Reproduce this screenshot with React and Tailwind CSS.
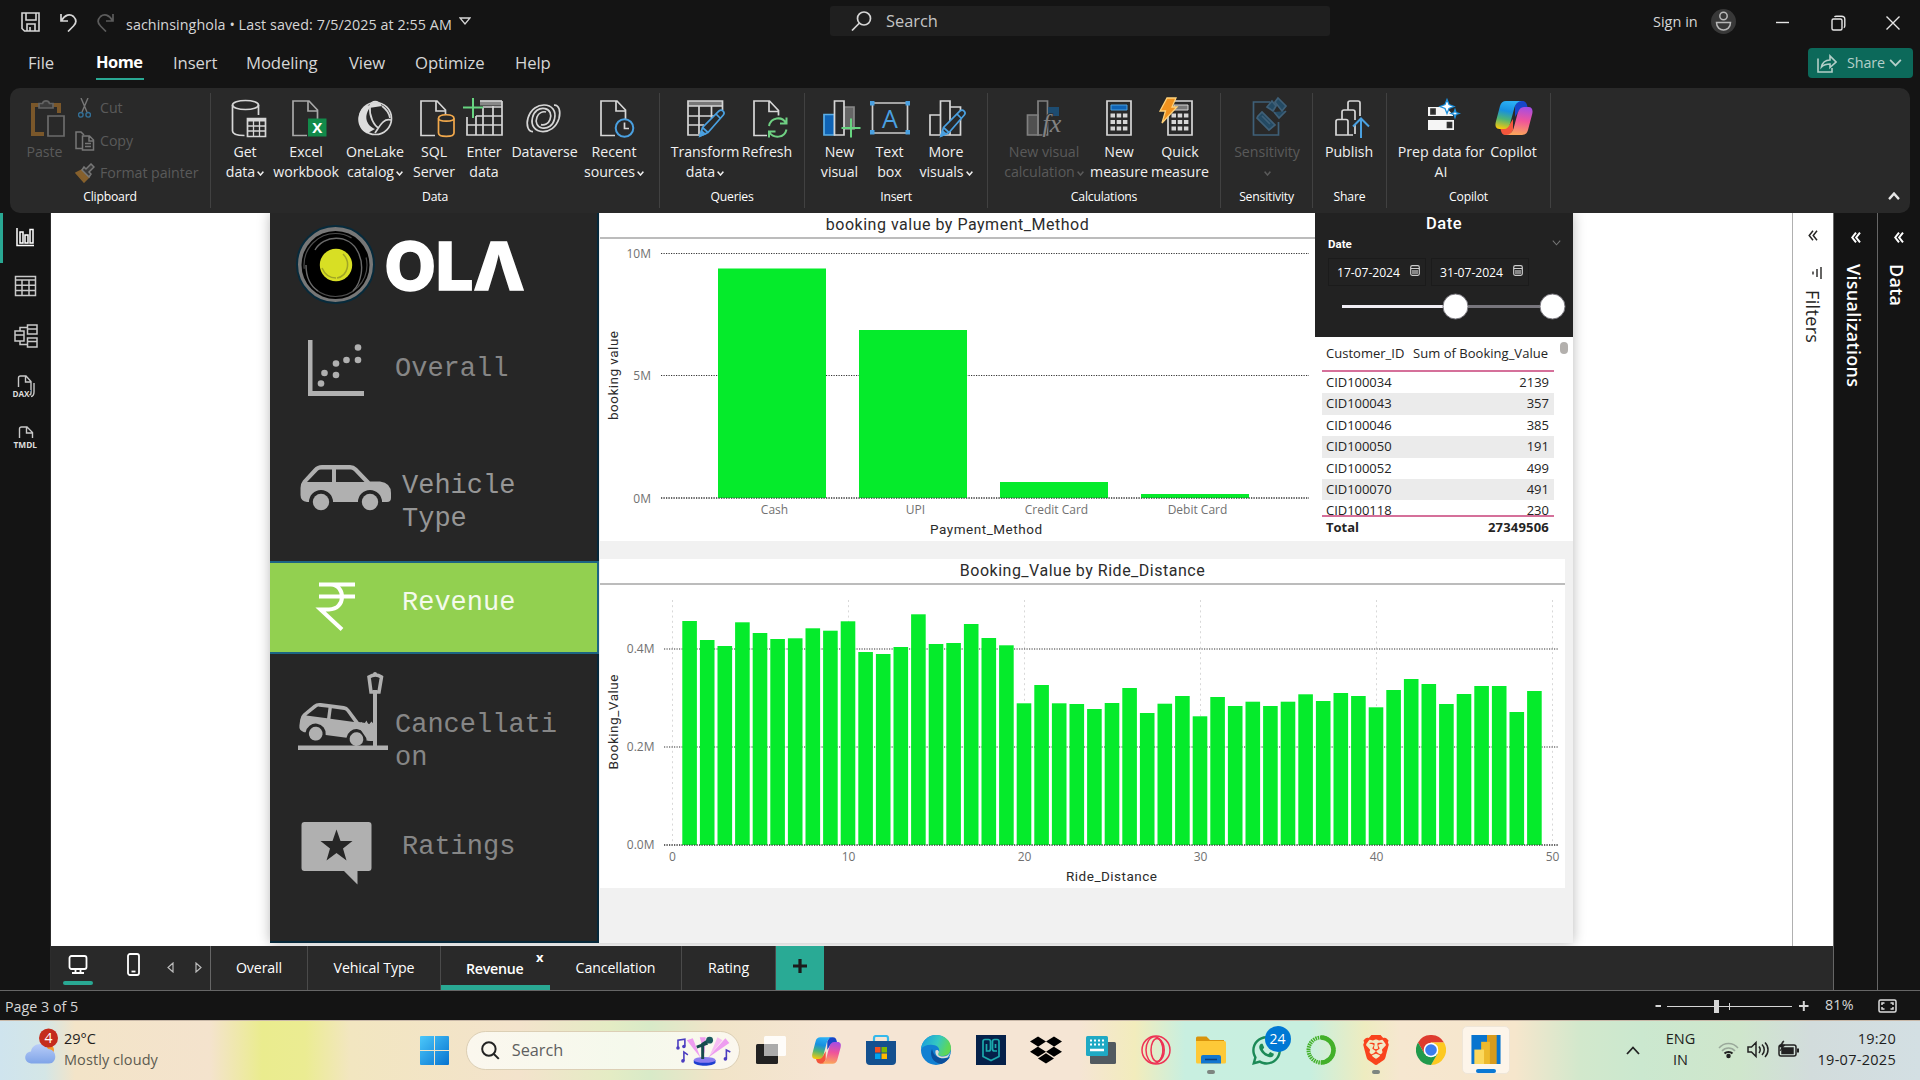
import React from "react";
import { FaWhatsapp, FaDropbox } from "react-icons/fa";
import { SiBrave } from "react-icons/si";

const LINE = "#d6d6d6";
const BLUE = "#4aa0e0";

/* ---------- shared drawings ---------- */

function Chevron({ className = "", w = 8, h = 5, sw = 1.6, up = false }) {
  return (
    <svg className={className} width={w} height={h} viewBox="0 0 8 5" preserveAspectRatio="none" fill="none" stroke="currentColor" strokeWidth={sw}>
      <path d={up ? "M.7 4.4 4 1l3.3 3.4" : "M.7.6 4 4 7.3.6"} />
    </svg>
  );
}

const COPILOT_WING = "M12 3H28C24 3 21.500 6 20.300 10L16.300 25C15 29 13 31 10 31H5.500C2 31 .8 28 1.800 24L6 8C7 4.500 9 3 12 3Z";

function CopilotLogo({ size = 38, id }) {
  return (
    <svg width={size} height={size} viewBox="0 0 40 40" fill="none">
      <defs>
        <linearGradient id={id + "a"} x1="14" y1="3" x2="8" y2="31" gradientUnits="userSpaceOnUse">
          <stop offset="0" stopColor="#2bb0f5" />
          <stop offset=".35" stopColor="#1790e0" />
          <stop offset=".65" stopColor="#4fb474" />
          <stop offset="1" stopColor="#f7c80c" />
        </linearGradient>
        <linearGradient id={id + "b"} x1="12" y1="3" x2="8" y2="31" gradientUnits="userSpaceOnUse">
          <stop offset="0" stopColor="#fba35c" />
          <stop offset=".5" stopColor="#f0549a" />
          <stop offset="1" stopColor="#a34de6" />
        </linearGradient>
      </defs>
      <path d="M24 3h4c3.500 0 4.500 2 5.300 5l.8 3.500C29 11 25 11 23.500 15L21 19V8z" fill="#1746c9" />
      <path d="M16 37h-4c-3.500 0-4.500-2-5.300-5L5.900 28.500C11 29 15 29 16.500 25L19 21V32z" fill="#f3563c" />
      <path d={COPILOT_WING} fill={`url(#${id}a)`} />
      <path d={COPILOT_WING} fill={`url(#${id}b)`} transform="rotate(180 20 20)" />
    </svg>
  );
}

/* ---------- ribbon icons, all on a 40x40 grid ---------- */

function Ico({ children, className = "" }) {
  return (
    <svg className={"overflow-visible " + className} width="40" height="40" viewBox="0 0 40 40" fill="none" stroke={LINE} strokeWidth="1.7">
      {children}
    </svg>
  );
}

const DocShape = ({ stroke = LINE }) => <path stroke={stroke} d="M21 37.500H7V3h16l8.500 9v9M22 3v10h9.500" />;

const Pencil = () => (
  <g stroke={BLUE} fill="#292929">
    <path d="M15 38l2.500-8.500L34 13c3-2.500 6.500 1.500 4.300 4L23 34.500z" />
    <path d="M31 16l4.500 4.500M17.500 29.500L23 34.500" />
    <path d="M15 38l1.500-5 3.500 3z" fill={BLUE} />
  </g>
);

const Keys = () => <path d="M11.500 17.500h17M11.500 24h17M11.500 30.500h17" strokeWidth="4" strokeDasharray="4.500 1.700" />;

const DATAVERSE_ARM = "M8 33.500C3 34 1 27 3 20C6 10.500 13 7 19 7C27 7 31.500 13 29.500 21C28 27.500 23 31 17 30C12 29 10 24 12 19C13.500 15 17.500 13 21 14";

const icons = {
  paste: (
    <Ico className="opacity-45">
      <path d="M19 36H8V7h26v8" stroke="#dc8f2c" strokeWidth="4" />
      <path d="M14 10V5.500h3.500C18.500 2 23.500 2 24.500 5.500H28V10z" fill="#555" stroke="#aaa" />
      <path d="M23 18h16v20H23z" fill="#292929" stroke="#bbb" />
    </Ico>
  ),
  getData: (
    <Ico>
      <ellipse cx="20.500" cy="7" rx="13" ry="4.500" />
      <path d="M7.500 7v26c0 2.500 4 4.500 12 4.500M33.500 7v10" />
      <path d="M22.500 20.500h18v18h-18z" fill="#292929" />
      <path d="M22.500 22h18" strokeWidth="3" />
      <path d="M22.500 28h18M22.500 33h18M28.500 23v15M34.500 23v15" strokeWidth="1.300" />
    </Ico>
  ),
  excel: (
    <Ico>
      <DocShape stroke="#a8a8a8" />
      <path d="M22 20.500h18.500v18H22z" fill="#128a4a" stroke="none" />
      <text x="31.300" y="35" textAnchor="middle" fontSize="15" fontWeight="700" fill="#fff" stroke="none">X</text>
    </Ico>
  ),
  onelake: (
    <Ico>
      <path d="M14 8c2-7 10-7 13 0l-13 2z" fill="#ddd" stroke="none" />
      <circle cx="20.500" cy="20.500" r="16" />
      <path d="M12 7C0 14 1 30 12 35.500L20 31C11 27 8 18 16 8z" fill="#ddd" stroke="none" />
      <path d="M15 9c-1 9 4 19 9 21M36 22c-8-2-11 6-16 13M27 8c4 3 7 6 8 12" />
    </Ico>
  ),
  sql: (
    <Ico>
      <DocShape />
      <path d="M24.500 20.500c0-5 15.500-5 15.500 0v14.500c0 4.500-15.500 4.500-15.500 0z" fill="#292929" stroke="#f2a94c" />
      <path d="M24.500 20.500c0 3.500 15.500 3.500 15.500 0" stroke="#f2a94c" />
    </Ico>
  ),
  enter: (
    <Ico>
      <path d="M16 5h22" strokeWidth="5" stroke="#888" />
      <path d="M38 3v34H3V19M16 3h22M3 27h35M19 10v27M29 8v29M12 18h26M12 18v19M19 9h19" />
      <path d="M9 0v20M-1 9.500h20" stroke="#67d480" strokeWidth="2" />
    </Ico>
  ),
  dataverse: (
    <Ico>
      <path d={DATAVERSE_ARM} />
      <path d={DATAVERSE_ARM} transform="rotate(180 18.500 20.300)" />
    </Ico>
  ),
  recent: (
    <Ico>
      <DocShape />
      <circle cx="30.500" cy="30" r="8.800" fill="#292929" stroke={BLUE} strokeWidth="2" />
      <path d="M30.500 24.500V30.500H35" />
    </Ico>
  ),
  transform: (
    <Ico>
      <path d="M3 5.500h34.500" strokeWidth="5" stroke="#777" />
      <path d="M37.500 12V3H3v34h12M3 8h34.500M3 18h26M3 27h16M14 8v28M26.500 8v12" />
      <Pencil />
    </Ico>
  ),
  refresh: (
    <Ico>
      <path d="M20 37.500H7V3h15.500l9 9.500v5M22 3v10.500h9.500" />
      <g stroke="#6fd083" strokeWidth="2">
        <path d="M22 28c2-9 13-10 17-3M39.500 19.500v6h-6.500" />
        <path d="M39.500 31.500c-2 9-13 9-17 3M22 39.500v-6h6.500" />
      </g>
    </Ico>
  ),
  newVisual: (
    <Ico>
      <path d="M24 9h10v22H24z" fill="#666" stroke="#888" />
      <path d="M4 16.500h10.500V37H4z" fill="#0f63b5" stroke="#5aaee8" />
      <path d="M14.500 3h9.500v34h-9.500z" fill="#292929" />
      <path d="M31 20.500v19M21.500 30h19" stroke="#67d480" strokeWidth="2" />
    </Ico>
  ),
  textBox: (
    <Ico>
      <path d="M2.500 5h35v30h-35z" stroke="#ccc" />
      <g fill={BLUE} stroke="none">
        <rect x="0" y="3" width="4.500" height="4.500" /><rect x="35.500" y="3" width="4.500" height="4.500" />
        <rect x="0" y="32" width="4.500" height="4.500" /><rect x="35.500" y="32" width="4.500" height="4.500" />
      </g>
      <text x="20" y="29.500" textAnchor="middle" fontSize="25" fill={BLUE} stroke="none">A</text>
    </Ico>
  ),
  moreVisuals: (
    <Ico>
      <path d="M4 17h10.500v20H4zM14.500 3H24v34h-9.500zM24 9h10.500v28H24" />
      <Pencil />
    </Ico>
  ),
  visualCalc: (
    <Ico className="opacity-50">
      <path d="M3.500 17H14v20H3.500z" fill="#777" />
      <path d="M14 3h9.500v34H14z" />
      <path d="M24 9h11v9H24z" fill="#1370b8" stroke="none" />
      <text x="28" y="34" textAnchor="middle" fontFamily="Liberation Serif, serif" fontStyle="italic" fontSize="26" fill="#ddd" stroke="#292929" strokeWidth="1.500" paintOrder="stroke">fx</text>
    </Ico>
  ),
  measure: (
    <Ico>
      <path d="M8 3h24v34H8z" />
      <path d="M12 7h16v5H12z" fill="#0f63b5" stroke="#4aa0e0" strokeWidth="1" />
      <Keys />
    </Ico>
  ),
  quick: (
    <Ico>
      <path d="M8 3h24v34H8z" />
      <path d="M14 7h14v5H14z" fill="#777" strokeWidth="1" />
      <Keys />
      <path d="M7 0h9l-4 9h5L2 25l3.500-12H0z" fill="#f0921e" stroke="#ffd27a" strokeWidth="1.300" />
    </Ico>
  ),
  sensitivity: (
    <Ico>
      <g stroke="#3f6078">
        <path d="M23 4H6.500v33h25V24" />
        <path d="M11 18l4-4 13 13-6 5-12-12zM15 18l8 8" fill="#244a63" />
        <path d="M20 9l5-6 4 5-3 5zM28 4l3-4 8 8-4 5zM27 14l5 6 7-7" fill="#244a63" />
      </g>
    </Ico>
  ),
  publish: (
    <Ico>
      <path d="M24 37H7V23.500q0-2 2-2h8q2 0 2 2V37M13 21V14q0-2 2-2h9q2 0 2 2v8M19 12V5q0-2 2-2h8q2 0 2 2v13M26 26v10" />
      <path d="M32 40V21M24 28.500l8-8 8 8" stroke={BLUE} strokeWidth="2" />
    </Ico>
  ),
  prep: (
    <Ico>
      <path d="M7 9h18l7 8v1H7z" fill="#f5f5f5" stroke="none" />
      <path d="M7 22h26v10H7z" fill="#f5f5f5" stroke="none" />
      <path d="M10 11h4v5h-4zM26.500 24.500h4v5h-4z" fill="#292929" stroke="#333" />
      <path d="M26 1.500l2 5 5 2-5 2-2 5-2-5-5-2 5-2zM34 11.500l1 3 3 1-3 1-1 3-1-3-3-1 3-1z" fill="#fff" stroke="#1a8fdc" strokeWidth="1.300" />
    </Ico>
  ),
};

/* ---------- title bar ---------- */

function TitleBar() {
  return (
    <div className="flex h-11 items-start text-[#d6d6d6]">
      <svg className="mt-3 ml-[21px]" width="19" height="20" viewBox="0 0 19 20" fill="none" stroke={LINE} strokeWidth="1.600">
        <path d="M1 1h17v18H3.500L1 16.500zM5 1v7h10V1M6 19v-7h8v7M9 15v4" />
      </svg>
      <svg className="mt-[13px] ml-5" width="17" height="19" viewBox="0 0 17 19" fill="none" stroke={LINE} strokeWidth="1.700">
        <path d="M1 1v7h7M1.500 7.500C5 1.500 10 .5 13.500 3.500c3.500 3.500 2.500 7 0 9.500L8 18.500" />
      </svg>
      <svg className="mt-[13px] ml-5" width="17" height="19" viewBox="0 0 17 19" fill="none" stroke="#5c5c5c" strokeWidth="1.700">
        <path d="M16 1v7H9M15.500 7.500C12 1.500 7 .5 3.500 3.500 0 7 1 10.500 3.500 13L9 18.500" />
      </svg>
      <div className="ml-3 flex h-[49px] w-[333px] items-center text-[14.300px] tracking-[0.070px] whitespace-nowrap">sachinsinghola • Last saved: 7/5/2025 at 2:55 AM</div>
      <svg className="mt-[17px]" width="12" height="8" viewBox="0 0 12 8" fill="none" stroke={LINE} strokeWidth="1.300"><path d="M1 1h10L6 7z" /></svg>
      <div className="mt-[6px] ml-[359px] flex h-[30px] w-[500px] items-center rounded-[3px] bg-[#1f1f1f]">
        <svg className="ml-[21px]" width="21" height="20" viewBox="0 0 21 20" fill="none" stroke={LINE} strokeWidth="1.700">
          <circle cx="13" cy="7.500" r="6.500" /><path d="M8.500 12L1 19.500" />
        </svg>
        <span className="ml-[14px] pt-px text-[16.400px] text-[#c4c4c4]">Search</span>
      </div>
      <div className="ml-[323px] flex h-[43px] w-[58px] items-center text-[14.500px] whitespace-nowrap">Sign in</div>
      <svg className="mt-[9px]" width="25" height="25" viewBox="0 0 25 25" fill="none" stroke="#b8b8b8" strokeWidth="1.500">
        <circle cx="12.500" cy="12.500" r="12.500" fill="#383838" stroke="none" />
        <circle cx="12.500" cy="7" r="3.700" /><path d="M5.500 13.500h14c0 10-14 10-14 0z" />
      </svg>
      <svg className="mt-[15px] ml-[40px]" width="125" height="16" viewBox="0 0 125 16" fill="none" stroke="#e6e6e6" strokeWidth="1.400">
        <path d="M0 7.500h13" />
        <path d="M56 5.500q0-1.500 1.500-1.500h7q1.500 0 1.500 1.500v8q0 1.500-1.500 1.500h-7q-1.500 0-1.500-1.500zM58.500 2q.5-.8 2-.8h5q3.300 0 3.300 3v6.500q0 1.500-1 2" />
        <path d="M110.500 1.500l13 13M123.500 1.500l-13 13" />
      </svg>
    </div>
  );
}

const menu = [
  ["File", "w-[68px]"],
  ["Home", "w-[77px]"],
  ["Insert", "w-[73px]"],
  ["Modeling", "w-[103px]"],
  ["View", "w-[66px]"],
  ["Optimize", "w-[100px]"],
  ["Help", "w-[60px]"],
];

function MenuBar() {
  return (
    <div className="flex h-11 items-start pl-7 text-[16.700px] tracking-[-0.100px] text-[#d6d6d6]">
      {menu.map(([label, w]) => (
        <div key={label} className={w}>
          {label === "Home" ? (
            <div className="flex h-9 w-12 items-center border-b-2 border-[#29a893] pt-[3px] text-[16.400px] font-bold tracking-[-0.500px] text-white">{label}</div>
          ) : (
            <div className="flex h-[37px] items-center">{label}</div>
          )}
        </div>
      ))}
      <div className="mt-1 ml-[1233px] flex h-[30px] w-[105px] items-center rounded-[4px] bg-[#0c695a] text-[#b4cfc9]">
        <svg className="ml-[9px]" width="20" height="19" viewBox="0 0 20 19" fill="none" stroke="currentColor" strokeWidth="1.600">
          <path d="M1 4.500V18h14v-4" /><path d="M4.500 13c1-5 4-7 8.500-7V2l6 6-6 5.500V10c-4 0-6 .5-8.500 3z" />
        </svg>
        <span className="-mt-px ml-[10px] w-[42px] text-[14.300px]">Share</span>
        <Chevron w={13} h={8} sw={1.1} />
      </div>
    </div>
  );
}

/* ---------- ribbon ---------- */

function RibbonButton({ icon, lines, w, arrow, off }) {
  return (
    <div className={`flex flex-none flex-col items-center ${w} ${off ? "text-[#5a5a5a]" : "text-[#f0f0f0]"}`}>
      {icon}
      <div className="mt-1 flex flex-col items-center text-[14.200px] leading-5 tracking-[-0.050px] whitespace-nowrap">
        {lines.map((l, i) => (
          <div key={i} className="flex h-5 items-center">
            {l}
            {arrow && i === lines.length - 1 && <Chevron className={l ? "mt-[3px] ml-[2px]" : "mt-[3px]"} w={7} />}
          </div>
        ))}
      </div>
    </div>
  );
}

function RibbonGroup({ label, w, pad, children }) {
  return (
    <div className={`my-[5px] flex flex-none flex-col border-r border-[#414141] ${w}`}>
      <div className={`flex h-[95px] pt-[5px] ${pad}`}>{children}</div>
      <div className="flex h-[18px] items-center justify-center text-[12.200px] tracking-[-0.200px] text-white">{label}</div>
    </div>
  );
}

function Ribbon() {
  return (
    <div className="mx-[10px] flex h-[125px] flex-none rounded-[10px] bg-[#292929]">
      <RibbonGroup label="Clipboard" w="w-[201px]" pad="pl-[13px]">
        <RibbonButton icon={icons.paste} lines={["Paste"]} w="w-[43px]" off />
        <div className="ml-[9px] flex flex-col gap-[12.500px] text-[14.200px] leading-5 tracking-[-0.050px] text-[#5a5a5a]">
          <div className="flex h-5 items-center gap-[6px]">
            <svg className="mx-[3px]" width="13" height="20" viewBox="0 0 13 20" fill="none" stroke="#777" strokeWidth="1.400">
              <path d="M3 0l6 14M10 0L4 14" /><g stroke="#336f96"><circle cx="2.800" cy="16.800" r="2.300" /><circle cx="10.200" cy="16.800" r="2.300" /></g>
            </svg>
            Cut
          </div>
          <div className="flex h-5 items-center gap-[5px]">
            <svg width="20" height="20" viewBox="0 0 20 20" fill="none" stroke="#777" strokeWidth="1.500">
              <path d="M7 17.500H1V1h5l3 3" /><path d="M7.500 5h7l4 4v10H7.500zM14 5v5h4.500M10 12.500h6M10 15.500h6" />
            </svg>
            Copy
          </div>
          <div className="flex h-5 items-center gap-[5px] whitespace-nowrap">
            <svg width="20" height="20" viewBox="0 0 20 20" fill="none" stroke="#777" strokeWidth="1.500">
              <path d="M1 10l6-3 7 7-5 5z" fill="#86602c" stroke="#86602c" /><path d="M7 7l7 7 2-3-2-2 5-5-3-3-5 5-2-2z" fill="#3a3a3a" />
            </svg>
            Format painter
          </div>
        </div>
      </RibbonGroup>
      <RibbonGroup label="Data" w="w-[449px]" pad="pl-[7px]">
        <RibbonButton icon={icons.getData} lines={["Get", "data"]} w="w-[54px]" arrow />
        <RibbonButton icon={icons.excel} lines={["Excel", "workbook"]} w="w-[68px]" />
        <RibbonButton icon={icons.onelake} lines={["OneLake", "catalog"]} w="w-[70px]" arrow />
        <RibbonButton icon={icons.sql} lines={["SQL", "Server"]} w="w-[48px]" />
        <RibbonButton icon={icons.enter} lines={["Enter", "data"]} w="w-[52px]" />
        <RibbonButton icon={icons.dataverse} lines={["Dataverse"]} w="w-[69px]" />
        <RibbonButton icon={icons.recent} lines={["Recent", "sources"]} w="w-[70px]" arrow />
      </RibbonGroup>
      <RibbonGroup label="Queries" w="w-[145px]" pad="pl-[10px]">
        <RibbonButton icon={icons.transform} lines={["Transform", "data"]} w="w-[70px]" arrow />
        <RibbonButton icon={icons.refresh} lines={["Refresh"]} w="w-[54px]" />
      </RibbonGroup>
      <RibbonGroup label="Insert" w="w-[183px]" pad="pl-[10px]">
        <RibbonButton icon={icons.newVisual} lines={["New", "visual"]} w="w-[49px]" />
        <RibbonButton icon={icons.textBox} lines={["Text", "box"]} w="w-[51px]" />
        <RibbonButton icon={icons.moreVisuals} lines={["More", "visuals"]} w="w-[62px]" arrow />
      </RibbonGroup>
      <RibbonGroup label="Calculations" w="w-[233px]" pad="pl-[10px]">
        <RibbonButton icon={icons.visualCalc} lines={["New visual", "calculation"]} w="w-[92px]" arrow off />
        <RibbonButton icon={icons.measure} lines={["New", "measure"]} w="w-[58px]" />
        <RibbonButton icon={icons.quick} lines={["Quick", "measure"]} w="w-[64px]" />
      </RibbonGroup>
      <RibbonGroup label="Sensitivity" w="w-[92px]" pad="pl-[10px]">
        <RibbonButton icon={icons.sensitivity} lines={["Sensitivity", ""]} w="w-[72px]" arrow off />
      </RibbonGroup>
      <RibbonGroup label="Share" w="w-[74px]" pad="pl-[10px]">
        <RibbonButton icon={icons.publish} lines={["Publish"]} w="w-[52px]" />
      </RibbonGroup>
      <RibbonGroup label="Copilot" w="w-[164px]" pad="pl-[7px]">
        <RibbonButton icon={icons.prep} lines={["Prep data for", "AI"]} w="w-[94px]" />
        <RibbonButton icon={<CopilotLogo size={40} id="ribbon" />} lines={["Copilot"]} w="w-[51px]" />
      </RibbonGroup>
      <Chevron className="mt-[104px] ml-[337px] text-[#e6e6e6]" w={12} h={8} sw={1.6} up />
    </div>
  );
}

/* ---------- left rail ---------- */

function Rail() {
  return (
    <div className="flex w-[51px] flex-none flex-col border-r border-[#2c2c2c]">
      <div className="h-[50px] w-full border-l-[3px] border-[#29a893] pt-[15px] pl-3">
        <svg width="20" height="19" viewBox="0 0 20 19" fill="none" stroke="#fff" strokeWidth="1.500">
          <path d="M2 0v17.500h17M5 4h3v11H5zM10 7h3v8h-3zM15 1.500h3V15h-3z" />
        </svg>
      </div>
      <svg className="mt-3 ml-[14px]" width="23" height="22" viewBox="0 0 23 22" fill="none" stroke="#c8c8c8" strokeWidth="1.500">
        <path d="M1.500 1.500h20v19h-20zM1.500 5h20M1.500 10.300h20M1.500 15.500h20M8 5v15.500M15 5v15.500" />
      </svg>
      <svg className="mt-[27px] ml-[14px]" width="24" height="24" viewBox="0 0 24 24" fill="none" stroke="#c8c8c8" strokeWidth="1.500">
        <path d="M1 7h9v10H1zM1 11h9M13.500 1H23v9h-9.500zM13.500 5H23M13.500 14H23v9h-9.500zM13.500 17.500H23M6 7V3.500h7M6 17v3.500h7" />
      </svg>
      <svg className="mt-[27px] ml-3 overflow-visible" width="26" height="23" viewBox="0 0 26 23" fill="none" stroke="#c8c8c8" strokeWidth="1.400">
        <path d="M6.500 12V3q0-2 2-2H14l5 5.500V18q0 2-2 2M13.500 1v6H19M22 8v9q0 4-3 4.500" />
        <text x="0.500" y="21.500" fontSize="9" fontWeight="700" textLength="17" lengthAdjust="spacingAndGlyphs" fill="#ddd" stroke="#141414" strokeWidth="2" paintOrder="stroke">DAX</text>
      </svg>
      <svg className="mt-[28px] ml-[13px] overflow-visible" width="26" height="23" viewBox="0 0 26 23" fill="none" stroke="#c8c8c8" strokeWidth="1.400">
        <path d="M6.500 12V3q0-2 2-2H14l5.500 5.500V12M13.500 1v6h6" />
        <text x="0.500" y="21.500" fontSize="9" fontWeight="700" textLength="23.500" lengthAdjust="spacingAndGlyphs" fill="#ddd" stroke="none">TMDL</text>
      </svg>
    </div>
  );
}

/* ---------- report page: navigation ---------- */

const GREY = "#b0b0b0";

function NavRow({ h, viewBox, vh, art, pt, ml = "", children, tone = "text-[#868686]" }) {
  return (
    <div className={`flex flex-none items-start ${h}`}>
      <svg className="flex-none" width="125" height={vh} viewBox={viewBox}>{art}</svg>
      <div className={`font-['Liberation_Mono',monospace] text-[27px] leading-[33px] ${tone} ${pt} ${ml}`}>{children}</div>
    </div>
  );
}

function CarBody() {
  return (
    <g>
      <path d="M300.500 488Q300.500 483.500 303 480.500L314 468.500Q317 465 322 465H350Q354 465 357 468L370 481.500H380Q391 483 391 493V498Q391 502 387 502H382A12 12 0 0 0 358 502H333A12 12 0 0 0 309 502H307Q300.500 501 300.500 495Z" fill={GREY} />
      <path d="M307 482L318 470.500Q319 469.500 321 469.500H332V482zM336 469.500H351Q352.500 469.500 354 471L364.500 482H336z" fill="#262626" />
      <circle cx="321" cy="502" r="8.200" fill={GREY} />
      <circle cx="370" cy="502" r="8.200" fill={GREY} />
    </g>
  );
}

function Nav() {
  return (
    <div className="mr-px flex h-[730px] w-[329px] flex-none flex-col border-r-2 border-b-2 border-[#06283a] bg-[#262626]">
      <svg className="flex-none" width="327" height="98" viewBox="270 213 327 98" fill="none">
        <circle cx="335.500" cy="264.500" r="38.500" fill="#777" stroke="#072a3b" strokeWidth="2" />
        <circle cx="335.500" cy="265" r="34" fill="#000" />
        <circle cx="335.500" cy="265" r="31.500" stroke="#4c4c4c" strokeWidth="1.200" strokeDasharray="70 25" />
        <path d="M315 250c8-15 34-17 43 2 7 14 3 31-5 39M306 265c0 14 6 22 12 26" stroke="#6a6a6a" strokeWidth="1.400" />
        <circle cx="336" cy="265" r="16.200" fill="#d8df24" />
        <path d="M343 254c8 8 5 22-6 24M322 268c3 7 8 10 14 10" stroke="#a0a526" strokeWidth="1.500" />
        <text x="384.500" y="289.500" fill="#fff" stroke="#fff" strokeWidth="1.500" fontFamily="Inter, sans-serif" fontWeight="800" fontSize="66" textLength="140" lengthAdjust="spacingAndGlyphs">OLΛ</text>
      </svg>
      <NavRow h="h-[133px]" viewBox="270 311 125 133" vh="133" pt="pt-[42px]" art={
        <g fill={GREY}>
          <path d="M308 340h4.500v51H364v5h-56z" />
          {[[321, 383.5], [324.5, 373], [336, 375], [336, 363.5], [346.5, 360], [358, 360], [358, 347.5]].map(([x, y]) => <circle key={x + "-" + y} cx={x} cy={y} r="3.300" />)}
        </g>
      }>Overall</NavRow>
      <NavRow h="h-[117px]" viewBox="270 444 125 117" vh="117" pt="pt-[26px]" ml="ml-[7px]" tone="text-[#969696]" art={<CarBody />}>Vehicle<br />Type</NavRow>
      <div className="flex h-[93px] w-[329px] flex-none items-start border-y-2 border-r-2 border-[#1c6583] bg-[#92d050]">
        <svg className="flex-none" width="125" height="89" viewBox="270 563 125 89" fill="none" stroke="#fff" strokeWidth="4">
          <path d="M319 584.500h36M319 596.500h36M328 584.500h3c15 1 15 25-2 25h-8.500l21.500 20" />
        </svg>
        <div className="ml-[7px] pt-[24px] font-['Liberation_Mono',monospace] text-[27px] leading-[33px] text-[#f4faec]">Revenue</div>
      </div>
      <NavRow h="h-[146px]" viewBox="270 654 125 146" vh="146" pt="pt-[55px]" art={
        <g>
          <g transform="translate(315.700 733.700) rotate(7.600) scale(.84) translate(-321 -502)"><CarBody /></g>
          <path d="M298 745.500h90v4.500h-90zM373 690h4v58h-4zM358 726l3.500-4 2 3 3-4.500 2 4.500 3-3.500 2.500 3v16h-6z" fill={GREY} />
          <path d="M369 677l2 15h8l2.500-15q-6-4-12.500 0z" fill="none" stroke={GREY} strokeWidth="3.500" />
          <circle cx="375" cy="674" r="2" fill={GREY} />
        </g>
      }>Cancellati<br />on</NavRow>
      <NavRow h="h-[141px]" viewBox="270 800 125 141" vh="141" pt="pt-[31px]" ml="ml-[7px]" art={
        <g>
          <path d="M304.500 822h64q3 0 3 3v43q0 3-3 3h-11v13.500L344 871h-39.500q-3 0-3-3v-43q0-3 3-3z" fill={GREY} />
          <path d="M336.500 829.500l4 11.500h12l-9.500 7.500 3.500 12-10-7.500-10 7.500 3.500-12-9.500-7.500h12z" fill="#262626" />
        </g>
      }>Ratings</NavRow>
    </div>
  );
}

/* ---------- report page: charts ---------- */

const GREEN = "#05eb2b";
const DIN = "Roboto, sans-serif";

function ChartTitle({ children }) {
  return (
    <div className="flex h-[26px] flex-none justify-center border-b-2 border-[#bcbcbc] pt-px font-['Roboto',sans-serif] text-[16px] leading-[22px] tracking-[0.510px] text-[#2b2b2b]">
      {children}
    </div>
  );
}

const payments = [
  ["Cash", 718, 268.5], ["UPI", 859, 330], ["Credit Card", 1000, 482], ["Debit Card", 1141, 494],
];

function PaymentChart() {
  return (
    <div className="flex w-[715px] flex-none flex-col bg-white">
      <ChartTitle>booking value by Payment_Method</ChartTitle>
      <svg width="715" height="302" viewBox="600 239 715 302" fontSize="12">
        {[["10M", 253.5], ["5M", 375.5], ["0M", 498]].map(([t, y]) => (
          <g key={t}>
            <path d={`M661 ${y}H1309`} stroke="#333" strokeWidth="1.200" strokeDasharray="1.200 1.300" />
            <text x="651" y={y + 4.500} textAnchor="end" fill="#717171">{t}</text>
          </g>
        ))}
        {payments.map(([t, x, y]) => (
          <g key={t}>
            <rect x={x} y={y} width="108" height={498 - y} fill={GREEN} />
            <text x={x + 56.5} y="514" textAnchor="middle" fill="#717171">{t}</text>
          </g>
        ))}
        <path d="M661 498H1309" stroke="#333" strokeWidth="1" strokeDasharray="1.200 1.300" />
        <text x="986" y="534" textAnchor="middle" fontFamily={DIN} fontSize="13.500" textLength="112" fill="#2b2b2b">Payment_Method</text>
        <text transform="translate(618 375.500) rotate(-90)" textAnchor="middle" fontFamily={DIN} fontSize="13.500" textLength="89" fill="#2b2b2b">booking value</text>
      </svg>
    </div>
  );
}

const rideTops = [
  621, 640, 646, 622.3, 633, 639, 638.3, 628.3, 630.7, 621.3, 652, 654, 647, 614.3, 644, 643, 624, 638, 645.3,
  703.3, 685, 703.3, 704, 709, 703, 688, 713, 703.7, 696, 716.3, 697, 706, 701.7, 706, 701.7, 694.3, 701, 693,
  696, 707.3, 690, 679, 684, 704, 694, 686, 686, 712, 691,
];

function RideChart() {
  return (
    <div className="mt-[18px] flex h-[329px] w-[965px] flex-none flex-col bg-white">
      <ChartTitle>Booking_Value by Ride_Distance</ChartTitle>
      <svg width="965" height="303" viewBox="600 585 965 303" fontSize="12">
        {[0, 10, 20, 30, 40, 50].map((n) => (
          <g key={n}>
            <path d={`M${672.5 + n * 17.6} 600V845`} stroke="#d8d8d8" strokeWidth="1" strokeDasharray="2 3.200" />
            <text x={672.5 + n * 17.6} y="861" textAnchor="middle" fill="#717171">{n}</text>
          </g>
        ))}
        {[["0.4M", 649], ["0.2M", 747], ["0.0M", 845]].map(([t, y]) => (
          <g key={t}>
            <path d={`M664 ${y}H1559`} stroke="#333" strokeWidth="1.200" strokeDasharray="1.200 1.300" />
            <text x="654.500" y={y + 4.3} textAnchor="end" fill="#717171">{t}</text>
          </g>
        ))}
        {rideTops.map((y, i) => (
          <rect key={i} x={682.3 + i * 17.6} y={y} width="14.600" height={845 - y} fill={GREEN} />
        ))}
        <path d="M664 845H1559" stroke="#333" strokeWidth="1" strokeDasharray="1.200 1.300" />
        <text x="1111.500" y="881" textAnchor="middle" fontFamily={DIN} fontSize="13.500" textLength="91" fill="#2b2b2b">Ride_Distance</text>
        <text transform="translate(618 722) rotate(-90)" textAnchor="middle" fontFamily={DIN} fontSize="13.500" textLength="95" fill="#2b2b2b">Booking_Value</text>
      </svg>
    </div>
  );
}

/* ---------- report page: slicer and table ---------- */

function DateField({ children }) {
  return (
    <div className="flex h-7 w-[98px] items-center border border-[#1b1b1b] pt-[2px] pl-2 text-[12.200px] tracking-[-0.080px] whitespace-nowrap text-white">
      <span className="w-[73px]">{children}</span>
      <svg className="-mt-[5px]" width="10" height="11" viewBox="0 0 10 11" fill="none" stroke="#ccc" strokeWidth="1.200">
        <rect x=".7" y=".7" width="8.600" height="9.600" rx="1.500" /><path d="M1 3.500h8M3 5v4M5 5v4M7 5v4" />
      </svg>
    </div>
  );
}

function DateSlicer() {
  return (
    <div className="flex h-[124px] flex-none flex-col bg-[#222]">
      <div className="flex h-[22px] items-center justify-center font-['Roboto',sans-serif] text-[16.500px] font-medium tracking-[0.500px] text-white">Date</div>
      <div className="flex h-[20px] items-center justify-between pr-[12px] pl-[13px] font-['Roboto',sans-serif] text-[11.500px] font-bold text-white">
        Date
        <Chevron className="-mt-1 text-[#777]" w={9} h={6} sw={0.9} />
      </div>
      <div className="mt-[3px] flex gap-[5px] pl-[13px]">
        <DateField>17-07-2024</DateField>
        <DateField>31-07-2024</DateField>
      </div>
      <svg className="mt-[6px]" width="258" height="30" viewBox="0 0 258 30">
        <path d="M27 14.500h113" stroke="#f0eef5" strokeWidth="3" />
        <path d="M140 14.500h97" stroke="#77757c" strokeWidth="3" />
        <circle cx="140.500" cy="14.500" r="12.500" fill="#fff" stroke="#77757c" strokeWidth="1" />
        <circle cx="237.500" cy="14.500" r="12.500" fill="#fff" stroke="#77757c" strokeWidth="1" />
      </svg>
    </div>
  );
}

const customers = [
  ["CID100034", "2139"], ["CID100043", "357"], ["CID100046", "385"], ["CID100050", "191"],
  ["CID100052", "499"], ["CID100070", "491"], ["CID100118", "230"],
];

function CustomerTable() {
  return (
    <div className="flex h-[204px] flex-none bg-white pl-[7px] text-[13px] text-[#252423]">
      <div className="flex w-[232px] flex-col">
        <div className="flex h-[35px] flex-none items-center justify-between border-b-2 border-[#d5709a] pr-[6px] pl-1 tracking-[0.020px] whitespace-nowrap">
          <span>Customer_ID</span><span>Sum of Booking_Value</span>
        </div>
        <div className="h-[143px] flex-none overflow-hidden">
          {customers.map(([id, v], i) => (
            <div key={id} className={`flex h-[21.400px] items-center justify-between pr-[5px] pl-1 ${i % 2 ? "bg-[#ebebeb]" : ""}`}>
              <span className="tracking-[-0.030px]">{id}</span><span>{v}</span>
            </div>
          ))}
        </div>
        <div className="flex h-[24px] items-center justify-between border-t-2 border-[#d5709a] pr-[5px] pl-1 font-bold">
          <span>Total</span><span className="tracking-[0.200px]">27349506</span>
        </div>
      </div>
      <div className="mt-[5px] ml-[6px] h-3 w-2 rounded-full bg-[#b3b0ad]" />
    </div>
  );
}

/* ---------- side panes ---------- */

function DoubleLeft({ className = "", sw = 1.6 }) {
  return (
    <svg className={className} width="10" height="11" viewBox="0 0 10 11" fill="none" stroke="currentColor" strokeWidth={sw}>
      <path d="M5 .7L1.200 5.500 5 10.300M9 .7L5.200 5.500 9 10.300" />
    </svg>
  );
}

function SidePane({ label, w }) {
  return (
    <div className={`flex flex-none flex-col items-center border-l border-[#666] text-white ${w}`}>
      <DoubleLeft className="mt-[19px]" sw={2} />
      <div className="mt-[21px] mr-1 text-[18px] leading-6 font-semibold tracking-[0.280px] [writing-mode:vertical-rl]">{label}</div>
    </div>
  );
}

/* ---------- page tabs and status bar ---------- */

function PageTab({ label, w }) {
  return <div className={`flex flex-none items-center justify-center border-r border-[#4a4a4a] ${w}`}>{label}</div>;
}

function PageTabs() {
  return (
    <div className="flex h-[44px] flex-none bg-[#292929] text-[14.200px] tracking-[-0.120px] whitespace-nowrap text-white">
      <div className="flex w-[160px] flex-none items-start border-r border-[#666]">
        <div className="mt-[9px] ml-[12px] flex w-[30px] flex-col items-center">
          <svg width="20" height="19" viewBox="0 0 20 19" fill="none" stroke="#fff" strokeWidth="1.800">
            <rect x="1.500" y="1" width="17" height="13" rx="2" /><path d="M7.500 14v3.500M12.500 14v3.500M4 18h12" />
          </svg>
          <div className="mt-[7px] h-1 w-[30px] rounded-[2px] bg-[#29a893]" />
        </div>
        <svg className="mt-[7px] ml-[34px]" width="13" height="23" viewBox="0 0 13 23" fill="none" stroke="#fff" strokeWidth="1.800">
          <rect x="1" y="1" width="11" height="21" rx="2" /><path d="M4.500 18.500h4" />
        </svg>
        <svg className="mt-[16px] ml-[27px]" width="35" height="11" viewBox="0 0 35 11" fill="none" stroke="#bbb" strokeWidth="1.200">
          <path d="M6 1v9L1 5.500zM29 1v9l5-4.500z" />
        </svg>
      </div>
      <PageTab label="Overall" w="w-[97px]" />
      <PageTab label="Vehical Type" w="w-[133px]" />
      <div className="flex w-[109px] flex-none items-start border-b-[5px] border-[#29a893] font-semibold">
        <span className="ml-[25px] w-[70px] pt-[12px] leading-[22px] tracking-[-0.250px]">Revenue</span>
        <span className="pt-[1px] text-[13px] leading-5 font-bold">x</span>
      </div>
      <PageTab label="Cancellation" w="w-[132px]" />
      <PageTab label="Rating" w="w-[94px]" />
      <div className="flex w-[48px] flex-none items-center justify-center bg-[#29aa95]">
        <svg width="14" height="14" viewBox="0 0 14 14" className="-mt-1" stroke="#1c1c1c" strokeWidth="3.200"><path d="M7 0v14M0 7h14" /></svg>
      </div>
    </div>
  );
}

function StatusBar() {
  return (
    <div className="flex h-[30px] flex-none items-center border-t border-[#666] text-[14.300px] text-[#d6d6d6]">
      <span className="ml-[5px] w-[1649px] pt-[2px]">Page 3 of 5</span>
      <svg width="156" height="16" viewBox="1654 997 156 16" fill="none" stroke="#d6d6d6">
        <path d="M1655.500 1005h5.500M1799 1005h9.500M1803.800 1000v10" strokeWidth="2" />
        <path d="M1667 1005.500h125M1729.500 1002v7" />
        <path d="M1714 999h5v13h-5z" fill="#d6d6d6" stroke="none" />
      </svg>
      <span className="-mt-px ml-[15px] w-[53px] tracking-[0.200px]">81%</span>
      <svg width="19" height="14" viewBox="0 0 19 14" fill="none" stroke="#ddd" strokeWidth="1.500">
        <rect x="1" y="1" width="17" height="12" rx="1.500" /><path d="M6.500 4H4v2M4 8v2h2.500M12.500 4H15v2M15 8v2h-2.500" />
      </svg>
    </div>
  );
}

/* ---------- taskbar ---------- */

function TaskItem({ children, dot }) {
  return (
    <div className="flex h-[60px] w-[55px] flex-none flex-col items-center">
      <div className="mt-[14px] flex h-8 items-center">{children}</div>
      {dot && <div className="mt-1 h-1 w-2 rounded-full bg-[#7d8580]" />}
    </div>
  );
}

function Taskbar() {
  return (
    <div className="flex h-[60px] flex-none items-start border-t border-[#c8b8a8] bg-[linear-gradient(90deg,#cfe4ee_0px,#d4e6e6_45px,#f3e4c8_75px,#f4e3cd_210px,#eaec8e_262px,#ebec92_305px,#f2e6c0_350px,#f3e3cc_520px,#e4ecc4_610px,#d8eac8_650px,#f1e4c8_715px,#f5e5d4_830px,#f5e5d4_1080px,#f2ecbc_1135px,#c8efe0_1185px,#c8efdf_1310px,#eeecc0_1365px,#f6e7d0_1400px,#f6e6cc_1515px,#d2e8cc_1580px,#cbe8cf_1640px,#cfe6cc_1740px,#d2dcdc_1810px,#d3dfe3_1920px)] text-[14.500px] text-[#1e1e1e]">
      <svg className="mt-[7px] ml-[24px]" width="36" height="38" viewBox="0 0 36 38">
        <defs><linearGradient id="cloud" x1="0" y1="0" x2="0" y2="1"><stop offset="0" stopColor="#b9cdf8" /><stop offset="1" stopColor="#7fa4e8" /></linearGradient></defs>
        <circle cx="24" cy="22" r="6" fill="#f5982c" />
        <path d="M9 35.500c-10 0-10-11-2-12C8 15 21 13 24 21c9 0 10 14 1 14.500z" fill="url(#cloud)" />
        <circle cx="24.500" cy="10" r="9.500" fill="#c42b1c" />
        <text x="24.500" y="15" textAnchor="middle" fontSize="14" fill="#fff">4</text>
      </svg>
      <div className="mt-[8px] ml-1 w-[356px] leading-[20.500px]">
        <div>29°C</div>
        <div className="tracking-[0.080px] text-[#5d5b50]">Mostly cloudy</div>
      </div>
      <svg className="mt-[15px]" width="29" height="29" viewBox="0 0 29 29">
        <defs><linearGradient id="win" x1="0" y1="0" x2="1" y2="1"><stop offset="0" stopColor="#4cc8fa" /><stop offset="1" stopColor="#0673d0" /></linearGradient></defs>
        <path d="M0 1q0-1 1-1h13v14H0zM15 0h13q1 0 1 1v13H15zM0 15h14v14H1q-1 0-1-1zM15 15h14v13q0 1-1 1H15z" fill="url(#win)" />
      </svg>
      <div className="mt-[10px] ml-[17px] flex h-[39px] w-[274px] flex-none items-center rounded-full border border-[#dccfb5] bg-[linear-gradient(90deg,#fbf7ee,#f5f9ec_60%,#fbf7ee)] pr-[7px] pl-[14px]">
        <svg width="20" height="19" viewBox="0 0 20 19" fill="none" stroke="#222" strokeWidth="2"><circle cx="8" cy="8" r="6.800" /><path d="M13 13l5 5" /></svg>
        <span className="ml-[11px] w-[166px] text-[16.300px] text-[#5f5f5f]">Search</span>
        <svg width="57" height="30" viewBox="0 0 57 30" fill="none">
          <path d="M25 22L11 4l6-2zM32 22L50 2l4 5zM29 18L24 1h6z" fill="#ea7ff0" opacity=".75" />
          <path d="M34 20L42 1l5 3z" fill="#f7aef5" opacity=".8" />
          <path d="M18 24v3c2 4 20 4 22 0v-3z" fill="#1d3fd0" /><ellipse cx="29" cy="24" rx="11" ry="3" fill="#8b7df0" />
          <path d="M27 23V8l8-5M21 11l11-4" stroke="#164a4e" strokeWidth="3" />
          <circle cx="34" cy="4" r="3.500" fill="#1b5a5e" />
          <path d="M2 12V4l7-1v7M8 25v-9l4 3M51 23v-9l4 2" stroke="#4a3cc0" strokeWidth="1.600" />
          <circle cx="2" cy="12" r="1.800" fill="#4a3cc0" /><circle cx="8" cy="10.500" r="1.800" fill="#4a3cc0" /><circle cx="7" cy="25" r="1.800" fill="#4a3cc0" /><circle cx="50" cy="23" r="1.800" fill="#4a3cc0" />
        </svg>
      </div>
      <div className="-mt-px ml-[3.500px] flex flex-none">
        <TaskItem>
          <svg width="30" height="28" viewBox="0 0 30 28"><rect x="0" y="8" width="22" height="20" rx="1.500" fill="#222" /><rect x="8" y="0" width="22" height="20" rx="1.500" fill="#fff" opacity=".88" /><path d="M8 8h14v12H8z" fill="#ababab" /></svg>
        </TaskItem>
        <TaskItem><CopilotLogo size={31} id="task" /></TaskItem>
        <TaskItem>
          <svg width="30" height="30" viewBox="0 0 30 30"><path d="M8 7V3q0-2 2-2h10q2 0 2 2v4" fill="none" stroke="#35b9ec" strokeWidth="2.200" /><path d="M0 6h30v20q0 4-4 4H4q-4 0-4-4z" fill="#14508f" />
            <path d="M9 12h5.500v5.500H9z" fill="#f25022" /><path d="M15.500 12H21v5.500h-5.500z" fill="#7fba00" /><path d="M9 18.500h5.500V24H9z" fill="#00a4ef" /><path d="M15.500 18.500H21V24h-5.500z" fill="#ffb900" /></svg>
        </TaskItem>
        <TaskItem>
          <svg width="30" height="30" viewBox="0 0 30 30">
            <defs><linearGradient id="edge" x1="0" y1="0" x2="1" y2=".3"><stop offset=".1" stopColor="#1aa0dc" /><stop offset=".6" stopColor="#35c8c0" /><stop offset="1" stopColor="#5fd755" /></linearGradient></defs>
            <circle cx="15" cy="15" r="15" fill="#1280d2" />
            <path d="M0 14C1 5 8 0 15 0c9 0 15 6 15 13 0 5-4 8-8 8-5 0-6-2-4-4 1-3-1-7-6-7-5-1-10 1-12 4z" fill="url(#edge)" />
            <path d="M11 14c-3 6 1 14 9 15 4-1 7-4 9-7-6 3-15 1-17-5z" fill="#0b4f9c" />
            <path d="M18 17c-2 3 0 4.500 4 4.500 3 0 6-1.500 7.500-4.500-1 3-2 4-3 5.500-7 2.500-13-1-12-7 1-1 3-1 3.500 1.500z" fill="#f5e5d4" opacity=".9" />
          </svg>
        </TaskItem>
        <TaskItem>
          <svg width="30" height="30" viewBox="0 0 30 30" fill="none" stroke="#1ba9ac" strokeWidth="1.700"><path d="M0 0h30v30H0z" fill="#05214a" stroke="none" />
            <path d="M7 18V6.500q0-2 2-2h3.500q2 0 2 2V14q0 2-2 2H10.500v-7M19.500 9v4M16.500 14V6.500q0-2 2-2H21q2 0 2 2V18M16.500 14q0 2 2 2H21M7 18v3.500l8 4 8-4V18" /></svg>
        </TaskItem>
        <TaskItem><FaDropbox size={32} color="#000" /></TaskItem>
        <TaskItem>
          <svg width="30" height="28" viewBox="0 0 30 28"><rect x="4" y="6" width="26" height="22" rx="1.500" fill="#525a60" /><rect x="0" y="0" width="22" height="20" rx="1.500" fill="#1fa9c4" /><path d="M4 4.500h15M4 8.500h15" stroke="#fff" strokeWidth="2" strokeDasharray="2 2" /><path d="M4 14h14" stroke="#fff" strokeWidth="2.500" /></svg>
        </TaskItem>
        <TaskItem>
          <svg width="30" height="30" viewBox="0 0 30 30" fill="none" stroke="#ee3355" strokeWidth="1.500"><circle cx="15" cy="15" r="14" /><ellipse cx="13.500" cy="15" rx="8.500" ry="13.300" /><ellipse cx="16" cy="15" rx="6" ry="11.500" /><path d="M18 3.500c7 5 7 18 0 23" /></svg>
        </TaskItem>
        <TaskItem dot>
          <svg width="30" height="28" viewBox="0 0 30 28"><path d="M0 2q0-1.500 1.500-1.500h9L14 4h14v10H0z" fill="#d9930c" /><path d="M0 5h28.500q1.500 0 1.500 1.500V26q0 1.500-1.500 1.500h-27Q0 27.500 0 26z" fill="#fdc938" /><path d="M5 27.500V21q0-2 2-2h16q2 0 2 2v6.500z" fill="#1277d0" /><path d="M9 23.500h12" stroke="#0a3f7c" strokeWidth="1.500" /></svg>
        </TaskItem>
        <TaskItem>
          <div className="relative">
            <FaWhatsapp size={33} color="#1c8a57" />
            <span className="absolute -top-2 left-[15px] flex h-[26px] w-[26px] items-center justify-center rounded-full bg-[#0078d4] text-[14px] text-white">24</span>
          </div>
        </TaskItem>
        <TaskItem>
          <svg width="30" height="30" viewBox="0 0 30 30" fill="none"><circle cx="15" cy="15" r="12.500" stroke="#43b02a" strokeWidth="4" strokeDasharray="1.500 .8" /><path d="M15 2.500A12.500 12.500 0 0 1 15 27.500" stroke="#43b02a" strokeWidth="4.500" /></svg>
        </TaskItem>
        <TaskItem dot><SiBrave size={30} color="#f9431d" /></TaskItem>
        <TaskItem>
          <svg width="30" height="30" viewBox="0 0 30 30"><path d="M2 7.500A15 15 0 0 1 28 7.500H15L8.500 18.700z" fill="#de3b2f" /><path d="M28 7.500A15 15 0 0 1 15 30l6.500-11.300L21.500 11 15 7.500z" fill="#fdc921" /><path d="M2 7.500A15 15 0 0 0 15 30l6.500-11.300H15L8.500 18.700z" fill="#219a4b" /><circle cx="15" cy="15" r="7.300" fill="#fff" /><circle cx="15" cy="15" r="5.800" fill="#3b7ded" /></svg>
        </TaskItem>
        <div className="mt-[6px] ml-[3px] flex h-12 w-12 flex-col items-center rounded-[5px] border border-[#efe6d8] bg-[#fdf5ea]">
          <svg className="mt-2" width="30" height="30" viewBox="0 0 30 30"><path d="M0 0h30v30H0z" fill="#0874cf" /><path d="M16 0h10v30H16z" fill="#d99b1c" /><path d="M10 7h9v23h-9z" fill="#ecb92c" /><path d="M3 15h10v15H3z" fill="#fbd85c" /></svg>
          <div className="mt-[5px] h-1 w-5 rounded-full bg-[#0a78d4]" />
        </div>
      </div>
      <svg className="mt-[25px] ml-[116px]" width="14" height="9" viewBox="0 0 14 9" fill="none" stroke="#222" strokeWidth="1.800"><path d="M1 8l6-6.500L13 8" /></svg>
      <div className="mt-[8px] ml-[20px] w-[42px] text-center leading-[20.500px]">ENG<br />IN</div>
      <svg className="mt-[19px] ml-[16px]" width="82" height="20" viewBox="1718 1040 82 20" fill="none" stroke="#222" strokeWidth="1.500">
        <path d="M1719 1048c5-6 14-6 19 0M1722 1051c3.500-4 9.500-4 13 0" stroke="#9aa99b" /><path d="M1724.500 1053.500c2-2 6-2 8 0" strokeWidth="2" /><circle cx="1728.500" cy="1056" r="1.500" fill="#222" />
        <path d="M1748 1047h3.500l4.500-4.500v14l-4.500-4.500h-3.500zM1759 1046.500c1.500 2 1.500 4.500 0 6.500M1762 1044.500c3 3 3 7.500 0 10.500M1765 1042.500c4 4 4 10.500 0 14.500" />
        <rect x="1779" y="1045" width="17" height="11" rx="2" /><path d="M1782 1048h11v5.500h-11z" fill="#222" /><path d="M1798 1048.500v4" strokeWidth="2" /><path d="M1783 1041l-4 6h3l-2 4 5-6h-3l2-4z" fill="#222" strokeWidth=".6" />
      </svg>
      <div className="mt-[8px] ml-auto pr-6 text-right leading-[20.500px] tracking-[0.280px]">19:20<br />19-07-2025</div>
    </div>
  );
}

export default function App() {
  return (
    <div className="flex h-[1080px] w-[1920px] flex-col overflow-hidden bg-[#141414] font-['Open_Sans','Noto_Sans',sans-serif]">
      <TitleBar />
      <MenuBar />
      <Ribbon />
      <div className="flex h-[777px] flex-none">
        <Rail />
        <div className="flex w-[1782px] flex-none flex-col">
          <div className="flex h-[733px] flex-none overflow-hidden bg-white">
            <div className="ml-[219px] flex h-[730px] w-[1303px] flex-none bg-[#f1f1f1] shadow-[0_0_12px_rgba(0,0,0,0.280)]">
              <Nav />
              <div className="flex w-[973px] flex-none flex-col">
                <div className="flex h-[328px] flex-none">
                  <PaymentChart />
                  <div className="flex w-[258px] flex-none flex-col">
                    <DateSlicer />
                    <CustomerTable />
                  </div>
                </div>
                <RideChart />
              </div>
            </div>
            <div className="ml-auto flex w-[41px] flex-none flex-col items-center border-l border-[#b0b0b0] text-[#252423]">
              <DoubleLeft className="mt-[17px]" sw={1.5} />
              <svg className="mt-[26px] ml-[7px]" width="11" height="12" viewBox="0 0 11 12" fill="none" stroke="#252423" strokeWidth="1.400"><path d="M10 0v12M6 2v8M2 4.500v3" /></svg>
              <div className="mt-[11px] text-[18px] leading-6 font-medium tracking-[0.350px] [writing-mode:vertical-rl]">Filters</div>
            </div>
          </div>
          <PageTabs />
        </div>
        <SidePane label="Visualizations" w="w-[44px]" />
        <SidePane label="Data" w="w-[43px]" />
      </div>
      <StatusBar />
      <Taskbar />
    </div>
  );
}
